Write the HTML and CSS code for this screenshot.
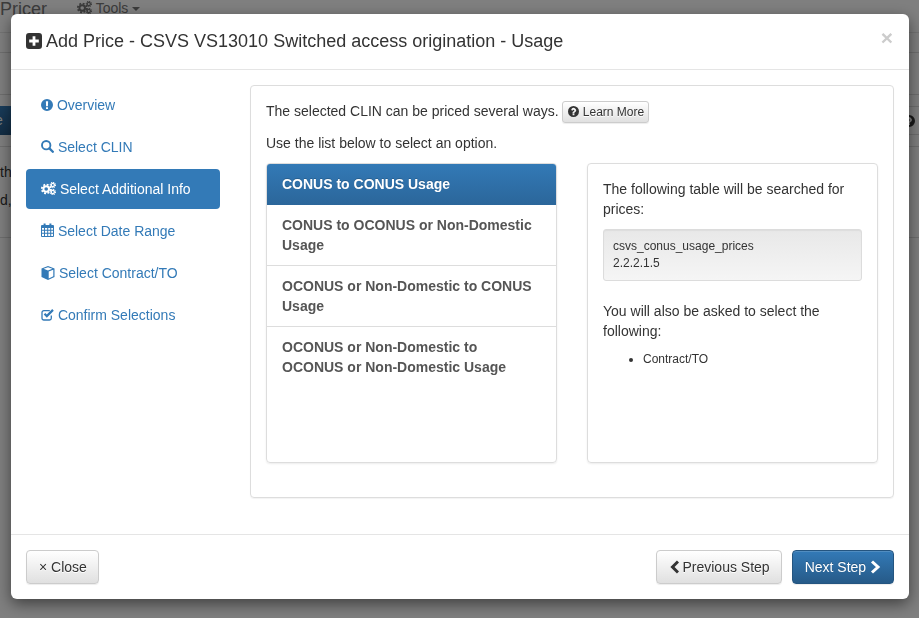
FILE: index.html
```html
<!DOCTYPE html>
<html lang="en">
<head>
<meta charset="utf-8">
<title>Pricer</title>
<link rel="stylesheet" href="styles.css">
</head>
<body>
<svg class="sprite" aria-hidden="true">
  <symbol id="i-plus" viewBox="0 0 16 16"><path fill-rule="evenodd" d="M3 0h10a3 3 0 0 1 3 3v10a3 3 0 0 1-3 3H3a3 3 0 0 1-3-3V3a3 3 0 0 1 3-3zM6.600 3.200v3.400H3.200v2.800h3.400v3.400h2.800V9.400h3.400V6.600H9.400V3.200z"/></symbol>
  <symbol id="i-excl" viewBox="0 0 12 12"><path fill-rule="evenodd" d="M6 0a6 6 0 1 1 0 12A6 6 0 0 1 6 0zM4.900 2.200l.2 5h1.800l.2-5zM5 8.200v1.700h2V8.200z"/></symbol>
  <symbol id="i-search" viewBox="0 0 13 13"><circle cx="5.200" cy="5.200" r="4.200" fill="none" stroke="currentColor" stroke-width="1.900"/><path d="M8.400 8.400l3.400 3.400" stroke="currentColor" stroke-width="2.300" stroke-linecap="round"/></symbol>
  <symbol id="i-cogs" viewBox="0 0 15 13">
    <circle cx="5.200" cy="7" r="2.800" fill="none" stroke="currentColor" stroke-width="2"/>
    <circle cx="5.200" cy="7" r="4.400" fill="none" stroke="currentColor" stroke-width="1.800" stroke-dasharray="1.900 1.550"/>
    <circle cx="11.800" cy="3" r="1.600" fill="none" stroke="currentColor" stroke-width="1.300"/>
    <circle cx="11.800" cy="3" r="2.600" fill="none" stroke="currentColor" stroke-width="1.200" stroke-dasharray="1.100 .95"/>
    <circle cx="11.800" cy="10" r="1.600" fill="none" stroke="currentColor" stroke-width="1.300"/>
    <circle cx="11.800" cy="10" r="2.600" fill="none" stroke="currentColor" stroke-width="1.200" stroke-dasharray="1.100 .95"/>
  </symbol>
  <symbol id="i-cal" viewBox="0 0 13 14"><path fill-rule="evenodd" d="M1 2h1.600V.4h2V2h3.800V.4h2V2H12a1 1 0 0 1 1 1v10a1 1 0 0 1-1 1H1a1 1 0 0 1-1-1V3a1 1 0 0 1 1-1zM1 5v1.800h2V5zm3 0v1.800h2.200V5zm3.200 0v1.800h2V5zm3 0v1.800H12V5zM1 7.800v1.900h2V7.800zm3 0v1.900h2.200V7.800zm3.200 0v1.900h2V7.800zm3 0v1.900H12V7.800zM1 10.700V13h2v-2.300zm3 0V13h2.200v-2.300zm3.200 0V13h2v-2.300zm3 0V13H12v-2.300z"/></symbol>
  <symbol id="i-cube" viewBox="0 0 14 14"><path fill-rule="evenodd" d="M7 0l6.500 2.400v8.600L7 14 .5 11V2.400zM7 1.200L2.600 2.800 7 4.500l4.400-1.700zM7.700 5.600v6.900l4.600-2.200V3.800z"/></symbol>
  <symbol id="i-check" viewBox="0 0 13 13"><path d="M10.300 7.500v2.700a1.800 1.800 0 0 1-1.800 1.800H2.800A1.800 1.800 0 0 1 1 10.200V4.500a1.800 1.800 0 0 1 1.800-1.800h6" fill="none" stroke="currentColor" stroke-width="1.300"/><path d="M3.500 5.800l2.300 2.300L12 1.900" fill="none" stroke="currentColor" stroke-width="2.200"/></symbol>
  <symbol id="i-help" viewBox="0 0 12 12"><path fill-rule="evenodd" d="M6 0a6 6 0 1 1 0 12A6 6 0 0 1 6 0zM5 8.300v1.700h2V8.300zM3.500 4.300l1.400.8c.2-.6.600-.9 1.100-.9.500 0 .9.300.9.700 0 .9-2 1-2 2.800v.2h2c0-1.100 2.100-1.300 2.100-3.200C8.500 3.200 7.300 2 6 2 4.800 2 4 2.900 3.500 4.300z"/></symbol>
  <symbol id="i-left" viewBox="0 0 9 14"><path d="M8 1.500L2.500 7 8 12.500" fill="none" stroke="currentColor" stroke-width="3"/></symbol>
  <symbol id="i-right" viewBox="0 0 11 14"><path d="M2 1.500L8 7l-6 5.500" fill="none" stroke="currentColor" stroke-width="3"/></symbol>
</svg>

<div class="page">
  <nav class="topnav">
    <span class="brand">Pricer</span>
    <span class="tools"><svg class="ic ic-cogs"><use href="#i-cogs"/></svg> Tools <span class="caret"></span></span>
  </nav>
  <div class="subbar"></div>
  <div class="toolbar">
    <div class="toolrow"><span class="bluebtn">e</span><span class="rightlink"><svg class="ic ic-excl"><use href="#i-help"/></svg> C</span></div>
  </div>
  <p class="behind">the</p>
  <p class="behind">d,</p>
  <div class="endline"></div>
</div>

<div class="backdrop"></div>

<div class="modal">
  <header class="modal-header">
    <h4 class="modal-title"><svg class="ic-title"><use href="#i-plus"/></svg> Add Price - CSVS VS13010 Switched access origination - Usage</h4>
    <span class="dismiss">×</span>
  </header>

  <div class="modal-body">
    <ul class="steps">
      <li><a class="step" href="#"><svg class="ic ic-excl"><use href="#i-excl"/></svg> Overview</a></li>
      <li><a class="step" href="#"><svg class="ic ic-search"><use href="#i-search"/></svg> Select CLIN</a></li>
      <li><a class="step active" href="#"><svg class="ic ic-cogs"><use href="#i-cogs"/></svg> Select Additional Info</a></li>
      <li><a class="step" href="#"><svg class="ic ic-date"><use href="#i-cal"/></svg> Select Date Range</a></li>
      <li><a class="step" href="#"><svg class="ic ic-cube"><use href="#i-cube"/></svg> Select Contract/TO</a></li>
      <li><a class="step" href="#"><svg class="ic ic-search"><use href="#i-check"/></svg> Confirm Selections</a></li>
    </ul>

    <section class="panel">
      <p class="lead-line">The selected CLIN can be priced several ways. <button class="btn btn-xs"><svg class="ic ic-help"><use href="#i-help"/></svg> Learn More</button></p>
      <p class="use-line">Use the list below to select an option.</p>
      <div class="columns">
        <div class="options">
          <a class="option active" href="#">CONUS to CONUS Usage</a>
          <a class="option" href="#">CONUS to OCONUS or Non-Domestic Usage</a>
          <a class="option" href="#">OCONUS or Non-Domestic to CONUS Usage</a>
          <a class="option" href="#">OCONUS or Non-Domestic to OCONUS or Non-Domestic Usage</a>
        </div>
        <div class="details">
          <p class="detail-text">The following table will be searched for prices:</p>
          <div class="well">csvs_conus_usage_prices<br>2.2.2.1.5</div>
          <p class="detail-text">You will also be asked to select the following:</p>
          <ul class="asked"><li>Contract/TO</li></ul>
        </div>
      </div>
    </section>
  </div>

  <footer class="modal-footer">
    <button class="btn btn-close"><span class="times">×</span> Close</button>
    <div class="nav-buttons">
      <button class="btn btn-prev"><svg class="ic ic-prev"><use href="#i-left"/></svg> Previous Step</button>
      <button class="btn btn-primary">Next Step <svg class="ic ic-chev"><use href="#i-right"/></svg></button>
    </div>
  </footer>
</div>
</body>
</html>
```
FILE: styles.css
```css
* { box-sizing: border-box; }
html, body { margin: 0; height: 100%; overflow: hidden; }
body {
  font-family: "Liberation Sans", Arial, sans-serif;
  font-size: 14px;
  line-height: 20px;
  color: #333;
  background: #fff;
}
.sprite { display: none; }
.ic { display: inline-block; vertical-align: -1px; fill: currentColor; }
.ic-excl { width: 12px; height: 12px; }
.ic-search { width: 13px; height: 13px; }
.ic-cogs { width: 15px; height: 13px; }
.ic-date { width: 13px; height: 14px; vertical-align: -1px; }
.ic-cube { width: 14px; height: 14px; vertical-align: -2px; }
.ic-help { width: 11px; height: 11px; }
.ic-chev { width: 11px; height: 14px; vertical-align: -2px; }
.ic-prev { width: 9px; height: 14px; vertical-align: -2px; margin-left: 1px; }

/* page behind the dialog */
.page { height: 618px; overflow: hidden; }
.topnav {
  height: 33px;
  display: flex;
  align-items: flex-start;
  border-bottom: 1px solid #e7e7e7;
}
.brand { font-size: 18px; line-height: 18px; color: #777; }
.tools { margin-left: 30px; color: #777; line-height: 17px; }
.caret {
  display: inline-block;
  vertical-align: 2px;
  border-top: 4px solid #777;
  border-left: 4px solid transparent;
  border-right: 4px solid transparent;
}
.subbar { height: 20px; border-bottom: 1px solid #ddd; }
.toolbar { margin-top: 41px; border-top: 1px solid #ddd; border-bottom: 1px solid #ddd; padding: 11px 0; }
.toolrow {
  height: 29px;
  display: flex;
  justify-content: space-between;
  align-items: center;
  border-top: 1px solid #ddd;
  border-bottom: 1px solid #ddd;
}
.bluebtn {
  width: 12px;
  height: 29px;
  background: linear-gradient(#337ab7, #265a88);
  color: #fff;
  line-height: 29px;
  text-indent: -5px;
  overflow: hidden;
}
.rightlink { white-space: nowrap; width: 13px; color: #333; overflow: hidden; text-indent: -3px; }
.behind { margin: 0 0 8px; height: 20px; font-size: 14px; }
.behind:first-of-type { margin-top: 15px; }
.endline { margin-top: 27px; border-top: 1px solid #ddd; }
.backdrop { position: fixed; inset: 0; background: rgba(0,0,0,.5); }

/* dialog */
.modal {
  position: fixed;
  left: 11px;
  top: 14px;
  width: 898px;
  height: 585px;
  background: #fff;
  border-radius: 6px;
  box-shadow: 0 5px 15px rgba(0,0,0,.5);
  display: flex;
  flex-direction: column;
}
.modal-header {
  height: 56px;
  padding: 14px 15px 15px;
  border-bottom: 1px solid #e5e5e5;
  display: flex;
  justify-content: space-between;
}
.modal-title { margin: 0; font-size: 18px; line-height: 26px; font-weight: 400; color: #333; }
.ic-title { width: 16px; height: 16px; vertical-align: -2px; fill: #333; }
.dismiss { font-size: 21px; font-weight: 700; color: #ccc; line-height: 21px; margin: -1px 1px 0 0; }

.modal-body { flex: 1; padding: 15px; display: flex; gap: 30px; }
.steps { list-style: none; margin: 0; padding: 0; width: 194px; flex: none; display: flex; flex-direction: column; gap: 2px; }
.step {
  display: block;
  height: 40px;
  padding: 10px 15px;
  border-radius: 4px;
  color: #337ab7;
  text-decoration: none;
}
.step.active { background: #337ab7; color: #fff; }

.panel {
  flex: 1;
  height: 413px;
  border: 1px solid #ddd;
  border-radius: 4px;
  box-shadow: 0 1px 1px rgba(0,0,0,.05);
  padding: 15px;
}
.lead-line { margin: 0 0 10px; height: 22px; line-height: 20px; }
.use-line { margin: 0 0 10px; }
.columns { display: grid; grid-template-columns: 1fr 1fr; gap: 30px; height: 300px; }
.options, .details {
  border: 1px solid #ddd;
  border-radius: 4px;
  box-shadow: 0 1px 2px rgba(0,0,0,.075);
}
.options { overflow: hidden; }
.option {
  display: block;
  padding: 10px 15px;
  border-bottom: 1px solid #ddd;
  color: #555;
  font-weight: 700;
  text-decoration: none;
}
.option:last-child { border-bottom: 0; }
.option.active {
  margin: -1px -1px 0;
  padding: 11px 16px 11px;
  color: #fff;
  background: linear-gradient(#337ab7, #2b669a);
  border-bottom: 0;
  text-shadow: 0 -1px 0 #286090;
}
.details { padding: 15px; }
.detail-text { margin: 0 0 10px; }
.well {
  margin: 0 0 20px;
  padding: 8px 9px;
  height: 52px;
  border: 1px solid #dcdcdc;
  border-radius: 3px;
  font-size: 12px;
  line-height: 17px;
  background: linear-gradient(#e8e8e8, #f5f5f5);
  box-shadow: inset 0 1px 1px rgba(0,0,0,.05);
}
.asked { margin: 0; padding-left: 40px; font-size: 12px; line-height: 17px; }

.modal-footer {
  height: 65px;
  padding: 15px;
  border-top: 1px solid #e5e5e5;
  display: flex;
  justify-content: space-between;
}
.nav-buttons { display: flex; gap: 10px; }
.btn {
  height: 34px;
  padding: 6px 12px;
  font: inherit;
  color: #333;
  border: 1px solid #ccc;
  border-radius: 4px;
  background: linear-gradient(#fff, #e0e0e0);
  text-shadow: 0 1px 0 #fff;
  box-shadow: inset 0 1px 0 rgba(255,255,255,.15), 0 1px 1px rgba(0,0,0,.075);
}
.btn-close { padding-right: 11px; }
.btn-prev { padding-right: 11px; }
.btn-xs { height: 22px; padding: 1px 4px 1px 5px; font-size: 12px; line-height: 18px; border-radius: 3px; }
.btn-primary {
  color: #fff;
  border-color: #245580;
  background: linear-gradient(#337ab7, #265a88);
  text-shadow: 0 -1px 0 rgba(0,0,0,.2);
}
.times { font-size: 14px; }
```
